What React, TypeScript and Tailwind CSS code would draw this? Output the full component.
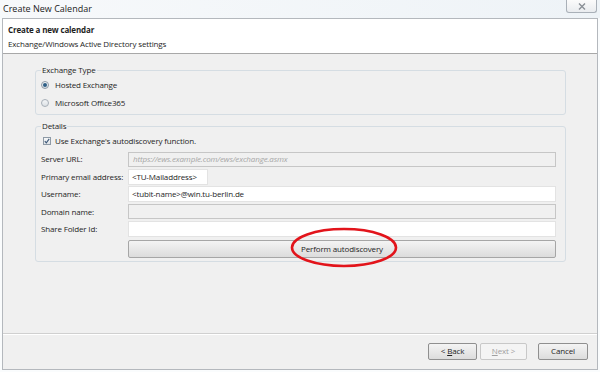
import React from "react";

const font = { fontFamily: '"Open Sans", "Noto Sans", sans-serif' };

function Row({ label, children }: { label: string; children: React.ReactNode }) {
  return (
    <div className="flex items-center h-[16px]">
      <div className="w-[87px] shrink-0 whitespace-nowrap">{label}</div>
      {children}
    </div>
  );
}

export default function App() {
  return (
    <div className="w-[600px] h-[372px] bg-[#fafcfd] relative overflow-hidden text-[8px] tracking-[-0.15px] text-[#1e1e1e]" style={font}>
      {/* title bar */}
      <div className="h-[18px] flex items-center pl-[3px] bg-gradient-to-r from-[#f7f9fb] to-[#eef3f7]">
        <span className="text-[9px] tracking-normal text-[#222]">Create New Calendar</span>
      </div>
      <div className="absolute right-[3px] top-0 w-[31px] h-[13px] border border-t-0 border-[#a9b0b8] rounded-b-[3px] bg-gradient-to-b from-[#fbfbfb] to-[#e9ecef] flex items-center justify-center">
        <svg width="8" height="7" viewBox="0 0 8 7">
          <path d="M1 0.5 L7 6.5 M7 0.5 L1 6.5" stroke="#8a8f96" strokeWidth="1.4" />
        </svg>
      </div>

      {/* window */}
      <div className="mx-[2px] h-[352px] border border-[#b4b8bd] flex flex-col bg-[#f0f0f0]">
        {/* header */}
        <div className="h-[35px] bg-white border-b border-[#a8a8a8] px-[5px] pt-[4px] flex flex-col gap-[1px]">
          <div className="font-bold leading-[13px]">Create a new calendar</div>
          <div className="leading-[13px]">Exchange/Windows Active Directory settings</div>
        </div>

        {/* content */}
        <div className="flex-1 pl-[32px] pr-[31px] pt-[10px] flex flex-col gap-[5px]">
          <fieldset className="border border-[#d5dde3] rounded-[3px] h-[51px] px-[5px]">
            <legend className="px-[1px] leading-[12px]">Exchange Type</legend>
            <div className="flex flex-col gap-[6px] pt-[3px]">
              <div className="flex items-center gap-[6px] h-[12px]">
                <span className="w-[8px] h-[8px] rounded-full border border-[#8e9aa6] bg-gradient-to-b from-[#f4f6f8] to-[#d8dde2] flex items-center justify-center">
                  <span className="w-[4px] h-[4px] rounded-full bg-[#2f5f86]" />
                </span>
                <span>Hosted Exchange</span>
              </div>
              <div className="flex items-center gap-[6px] h-[12px]">
                <span className="w-[8px] h-[8px] rounded-full border border-[#a8b0b8] bg-gradient-to-b from-[#f4f6f8] to-[#dde1e5]" />
                <span>Microsoft Office365</span>
              </div>
            </div>
          </fieldset>

          <fieldset className="border border-[#d5dde3] rounded-[3px] h-[142px] px-[5px]">
            <legend className="px-[1px] leading-[12px]">Details</legend>
            <div className="flex items-center gap-[4px] h-[12px] pl-[2px] mt-[3px]">
              <span className="w-[8px] h-[8px] border border-[#8e9aa6] bg-gradient-to-b from-[#f6f7f8] to-[#dfe3e7] flex items-center justify-center">
                <svg width="6" height="6" viewBox="0 0 6 6">
                  <path d="M0.8 3.2 L2.3 4.8 L5.2 0.9" stroke="#3c5878" strokeWidth="1.1" fill="none" />
                </svg>
              </span>
              <span>Use Exchange's autodiscovery function.</span>
            </div>
            <div className="flex flex-col gap-[1.5px] mt-[4px] pr-[4px]">
              <Row label="Server URL:">
                <div className="flex-1 h-[15px] border border-[#c6c6c6] bg-[#f0f0f0] flex items-center px-[4px] italic text-[#a6a6a6] whitespace-nowrap">
                  https://ews.example.com/ews/exchange.asmx
                </div>
              </Row>
              <Row label="Primary email address:">
                <div className="w-[80px] h-[16px] border border-[#e3e3e3] bg-white flex items-center px-[3px] whitespace-nowrap">
                  &lt;TU-Mailaddress&gt;
                </div>
              </Row>
              <Row label="Username:">
                <div className="flex-1 h-[16px] border border-[#e3e3e3] bg-white flex items-center px-[3px] whitespace-nowrap">
                  &lt;tubit-name&gt;@win.tu-berlin.de
                </div>
              </Row>
              <Row label="Domain name:">
                <div className="flex-1 h-[15px] border border-[#c6c6c6] bg-[#f0f0f0]" />
              </Row>
              <Row label="Share Folder Id:">
                <div className="flex-1 h-[16px] border border-[#e3e3e3] bg-white" />
              </Row>
              <div className="flex h-[18px] mt-[1px]">
                <div className="w-[87px] shrink-0" />
                <div className="flex-1 border border-[#a6a6a6] rounded-[2px] bg-gradient-to-b from-[#f4f4f4] to-[#dcdcdc] flex items-center justify-center">
                  Perform autodiscovery
                </div>
              </div>
            </div>
          </fieldset>
        </div>

        {/* footer */}
        <div className="h-[36px] border-t border-[#d0d0d0] shadow-[inset_0_1px_0_#ffffff] flex items-center justify-end pr-[9px] pb-[1px]">
          <div className="w-[49px] h-[17px] border border-[#8f8f8f] rounded-[2px] bg-gradient-to-b from-[#f4f4f4] to-[#dcdcdc] flex items-center justify-center">
            &lt;&nbsp;<span className="underline">B</span>ack
          </div>
          <div className="w-[47px] h-[17px] ml-[3px] border border-[#c8c8c8] rounded-[2px] bg-[#f4f4f4] flex items-center justify-center text-[#a0a0a0]">
            <span className="underline">N</span>ext&nbsp;&gt;
          </div>
          <div className="w-[50px] h-[17px] ml-[11px] border border-[#8f8f8f] rounded-[2px] bg-gradient-to-b from-[#f4f4f4] to-[#dcdcdc] flex items-center justify-center">
            Cancel
          </div>
        </div>
      </div>

      {/* red annotation ellipse */}
      <svg className="absolute left-0 top-0 pointer-events-none" width="600" height="372">
        <ellipse cx="344" cy="247.5" rx="52" ry="18.5" fill="none" stroke="#e2141b" strokeWidth="2.6" />
      </svg>
    </div>
  );
}
